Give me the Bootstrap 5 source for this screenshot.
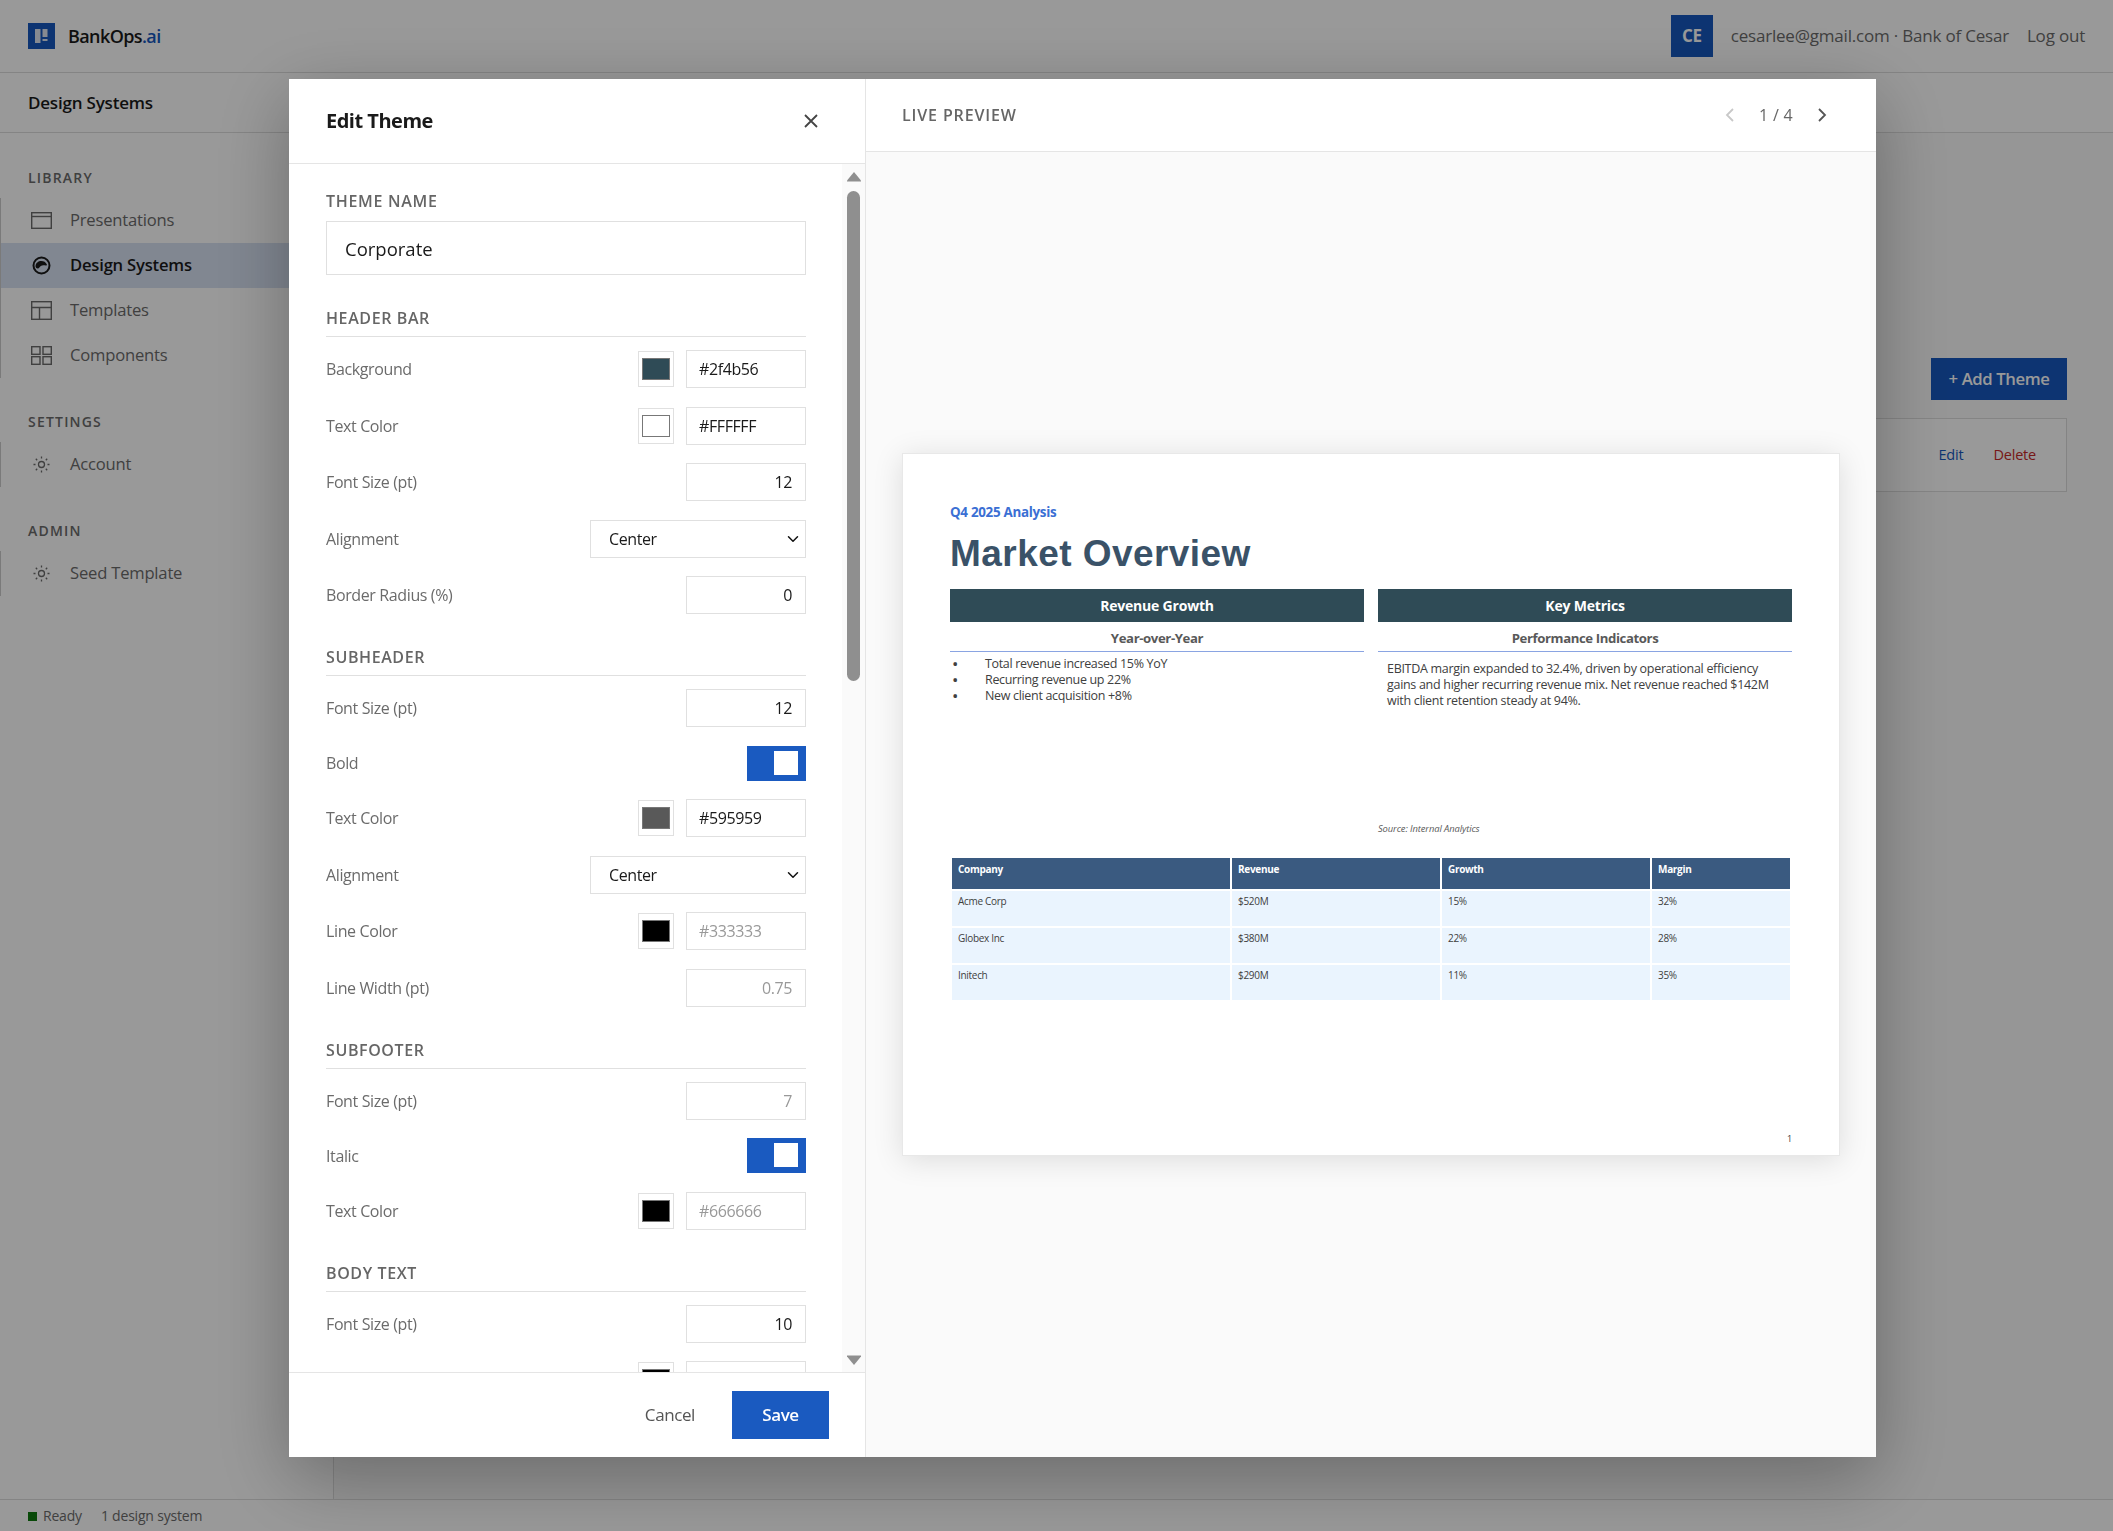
<!DOCTYPE html>
<html lang="en">
<head>
    <meta charset="UTF-8">
    <meta name="viewport" content="width=device-width, initial-scale=1">
    <title>Edit Theme</title>
    <link href="https://cdn.jsdelivr.net/npm/bootstrap@5.3.0/dist/css/bootstrap.min.css" rel="stylesheet">
    <script src="https://cdn.jsdelivr.net/npm/bootstrap@5.3.0/dist/js/bootstrap.bundle.min.js"></script>

    <style>
        html, body {
            height: 100%;
            overflow: hidden;
        }
        body {
            font-family: "Open Sans", "Noto Sans", sans-serif;
            font-size: 16px;
            letter-spacing: -0.2px;
            color: #1a1a1a;
            background: #fff;
        }

        /* page behind the dialog */
        .top-strip {
            height: 73px;
            padding: 0 28px;
            border-bottom: 1px solid #ddd;
        }
        .brand-row {
            gap: 13px;
        }
        .brand-mark {
            width: 27px;
            height: 26px;
            background: #1658be;
        }
        .brand-name {
            font-size: 18px;
            font-weight: 600;
            letter-spacing: -0.6px;
        }
        .brand-name span {
            color: #1658be;
        }
        .user-chip {
            width: 42px;
            height: 42px;
            background: #1658be;
            color: #fff;
            font-size: 17px;
            font-weight: 700;
            letter-spacing: -0.5px;
        }
        .user-text {
            margin-left: 18px;
            color: #6b6b6b;
            font-size: 17px;
        }
        .title-strip {
            height: 60px;
            padding: 0 28px;
            border-bottom: 1px solid #ddd;
            font-size: 17px;
            font-weight: 600;
        }
        .side-col {
            width: 334px;
            border-right: 1px solid #ddd;
            padding-top: 35px;
        }
        .side-head {
            height: 20px;
            margin-bottom: 10px;
            padding-left: 28px;
            font-size: 14px;
            font-weight: 600;
            letter-spacing: 1.2px;
            color: #6b6b6b;
            line-height: 20px;
        }
        .side-group {
            margin-bottom: 34px;
        }
        .side-link {
            height: 45px;
            padding-left: 31px;
            gap: 18px;
            border-left: 1px solid #ccc;
            color: #6b6b6b;
            font-size: 16.6px;
            text-decoration: none;
        }
        .side-link.current {
            background: #d7e1f2;
            color: #1a1a1a;
            font-weight: 600;
        }
        .side-link svg {
            flex: none;
            margin-left: -1px;
        }
        .main-col {
            background: #fafafa;
            padding: 225px 46px 0 0;
        }
        .add-btn {
            width: 136px;
            height: 42px;
            background: #1658be;
            color: #fff;
            font-size: 16.7px;
            font-weight: 600;
            border: 0;
            border-radius: 0;
            letter-spacing: -0.4px;
        }
        .theme-row {
            height: 74px;
            margin-top: 18px;
            padding-right: 30px;
            gap: 30px;
            background: #fff;
            border: 1px solid #ddd;
            font-size: 14.5px;
            font-weight: 500;
        }
        .status-strip {
            height: 32px;
            padding: 0 28px;
            gap: 19px;
            border-top: 1px solid #ddd;
            color: #6b6b6b;
            font-size: 14px;
        }
        .status-dot {
            display: inline-block;
            width: 9px;
            height: 9px;
            margin-right: 6px;
            background: #0e7a0e;
        }

        /* dialog */
        .dim-layer {
            position: fixed;
            inset: 0;
            background: rgba(0, 0, 0, 0.4);
            padding: 79px 0 74px 289px;
        }
        .theme-dialog {
            width: 1587px;
            height: 1378px;
            background: #fff;
            box-shadow: 0 20px 70px rgba(0, 0, 0, 0.3);
        }
        .edit-pane {
            width: 577px;
            border-right: 1px solid #e5e5e5;
        }
        .edit-head {
            height: 85px;
            padding: 0 47px 0 37px;
            border-bottom: 1px solid #e5e5e5;
        }
        .edit-title {
            font-size: 20px;
            font-weight: 700;
            margin: 0;
            letter-spacing: -0.5px;
        }
        .edit-body {
            min-height: 0;
            overflow: hidden;
        }
        .edit-form {
            width: 517px;
            padding: 27px 0 0 37px;
            flex: none;
        }
        .group-title {
            font-size: 16px;
            font-weight: 600;
            line-height: 20px;
            letter-spacing: 0.6px;
            color: #666;
            padding-bottom: 8px;
            margin: 33px 0 13px;
            border-bottom: 1px solid #e0e0e0;
        }
        .name-label {
            font-size: 16px;
            font-weight: 600;
            line-height: 20px;
            letter-spacing: 0.7px;
            color: #666;
            margin-bottom: 10px;
        }
        .name-input.form-control {
            height: 54px;
            padding-left: 18px;
            font-size: 18.5px;
            border: 1px solid #e0e0e0;
            border-radius: 0;
            color: #1a1a1a;
        }
        .field-stack {
            gap: 18.5px;
        }
        .field-row {
            min-height: 35px;
        }
        .field-name {
            color: #6b6b6b;
            font-size: 16px;
            letter-spacing: -0.38px;
        }
        .field-row .form-control,
        .field-row .form-select {
            height: 38px;
            border: 1px solid #e0e0e0;
            border-radius: 0;
            font-size: 16px;
            color: #1a1a1a;
            letter-spacing: -0.4px;
            background-color: #fff;
        }
        .field-row .form-control {
            width: 120px;
            padding: 0 13px 0 12px;
        }
        .field-row .form-select {
            width: 216px;
            padding: 0 30px 0 18px;
            background-position: right 4px center;
            --bs-form-select-bg-img: url("data:image/svg+xml,%3csvg xmlns='http://www.w3.org/2000/svg' viewBox='0 0 16 16'%3e%3cpath fill='none' stroke='%23111' stroke-linecap='round' stroke-linejoin='round' stroke-width='2' d='m2 5 6 6 6-6'/%3e%3c/svg%3e");
        }
        .field-row .form-control:disabled {
            color: #999;
            opacity: 1;
        }
        .field-row input[type=number] {
            text-align: right;
            -moz-appearance: textfield;
        }
        .field-row input[type=number]::-webkit-inner-spin-button {
            display: none;
        }
        .swatch-input {
            width: 36px;
            height: 36px;
            padding: 6px 3px;
            border: 1px solid #e0e0e0;
            background: #fff;
            flex: none;
        }
        .swatch-input::-webkit-color-swatch-wrapper {
            padding: 0;
        }
        .swatch-input::-webkit-color-swatch {
            border: 1px solid #777;
            border-radius: 0;
        }
        .square-toggle {
            width: 59px;
            height: 35px;
            padding: 5px 8px;
            background: #1a5ac0;
        }
        .square-toggle span {
            width: 24px;
            height: 24px;
            background: #fff;
        }
        .fake-scroll {
            width: 23px;
            margin-left: 36px;
            padding: 8px 5px 7px;
            background: #fafafa;
            flex: none;
        }
        .fake-thumb {
            width: 13px;
            height: 490px;
            margin-top: 9px;
            background: #8f8f8f;
            border-radius: 7px;
        }
        .edit-foot {
            height: 85px;
            padding-right: 36px;
            gap: 37px;
            border-top: 1px solid #e5e5e5;
        }
        .cancel-link {
            font-size: 17px;
            font-weight: 500;
            color: #555;
            letter-spacing: -0.4px;
        }
        .save-btn {
            width: 97px;
            height: 48px;
            padding: 0;
            background: #1a5ac0;
            color: #fff;
            border: 0;
            border-radius: 0;
            font-size: 17px;
            font-weight: 600;
            letter-spacing: -0.4px;
        }

        /* preview */
        .preview-head {
            height: 73px;
            padding: 0 49px 0 36px;
            border-bottom: 1px solid #e5e5e5;
        }
        .preview-label {
            font-size: 16px;
            font-weight: 600;
            letter-spacing: 0.85px;
            color: #666;
        }
        .pager-text {
            width: 82px;
            text-align: center;
            font-size: 16px;
            color: #666;
            letter-spacing: 0.3px;
        }
        .preview-stage {
            background: #fafafa;
        }
        .slide-sheet {
            position: relative;
            width: 938px;
            height: 703px;
            padding: 48px 47px 0;
            background: #fff;
            border: 1px solid #e8e8e8;
            box-shadow: 0 4px 28px rgba(0, 0, 0, 0.12);
        }
        .slide-kicker {
            font-size: 13.4px;
            font-weight: 700;
            line-height: 20px;
            color: #3b6fd4;
            letter-spacing: -0.3px;
        }
        .slide-title {
            font-family: "Liberation Sans", Arial, sans-serif;
            font-size: 37px;
            font-weight: 700;
            line-height: 42px;
            letter-spacing: 0.45px;
            color: #3a5268;
            margin: 11px 0 14px;
        }
        .slide-cols {
            gap: 14px;
        }
        .slide-col {
            width: 414px;
        }
        .col-bar {
            height: 33px;
            background: #2f4b56;
            color: #fff;
            font-size: 14px;
            font-weight: 700;
            line-height: 33px;
            text-align: center;
            letter-spacing: -0.2px;
        }
        .col-sub {
            height: 30px;
            line-height: 32px;
            font-size: 13.2px;
            font-weight: 700;
            color: #595959;
            text-align: center;
            border-bottom: 1px solid #8aa4e2;
            letter-spacing: -0.4px;
        }
        .col-list {
            margin: 4px 0 0;
            padding: 0;
            list-style: none;
            font-size: 12.5px;
            line-height: 16px;
            color: #404040;
            letter-spacing: -0.33px;
        }
        .col-list li {
            display: flex;
        }
        .col-list li::before {
            content: "\2022";
            width: 35px;
            padding-left: 2px;
            flex: none;
            font-size: 17px;
        }
        .col-para {
            margin: 9px 0 0;
            padding: 0 8px 0 9px;
            font-size: 12.5px;
            line-height: 16px;
            color: #404040;
            letter-spacing: -0.3px;
        }
        .slide-source {
            height: 14px;
            margin: 113px 0 0 428px;
            font-size: 9.4px;
            font-style: italic;
            line-height: 14px;
            color: #595959;
            letter-spacing: -0.1px;
        }
        .slide-table {
            width: 842px;
            margin: 20px 0 0;
            border-collapse: separate;
            border-spacing: 2px;
            table-layout: fixed;
            font-size: 10px;
            letter-spacing: -0.3px;
            color: #404040;
        }
        .slide-table th {
            height: 31px;
            padding: 0 6px 9px;
            background: #3a5a80;
            color: #fff;
            font-weight: 700;
        }
        .slide-table td {
            height: 35px;
            padding: 3px 6px 0;
            vertical-align: top;
            background: #eaf4fe;
        }
        .slide-num {
            position: absolute;
            right: 47px;
            bottom: 10px;
            font-size: 9px;
            color: #404040;
        }
    </style>
</head>
<body>

    <div class="d-flex flex-column h-100">
        <header class="top-strip d-flex align-items-center justify-content-between flex-none">
            <div class="brand-row d-flex align-items-center">
                <span class="brand-mark d-flex">
                    <svg width="27" height="26" viewBox="0 0 27 26"><path fill="#dfe6f2" d="M7 6h5.500v14H7zM14.500 6h5v8h-5zM14.500 16h5v2h-5z"/></svg>
                </span>
                <span class="brand-name">BankOps<span>.ai</span></span>
            </div>
            <div class="d-flex align-items-center">
                <span class="user-chip d-flex align-items-center justify-content-center">CE</span>
                <span class="user-text">cesarlee@gmail.com · Bank of Cesar</span>
                <span class="user-text">Log out</span>
            </div>
        </header>

        <div class="title-strip d-flex align-items-center">Design Systems</div>

        <div class="d-flex flex-grow-1" style="min-height: 0">
            <aside class="side-col flex-shrink-0">
                <div class="side-group">
                    <div class="side-head">LIBRARY</div>
                    <a class="side-link d-flex align-items-center" href="#">
                        <svg width="21" height="17" viewBox="0 0 21 17" fill="none" stroke="currentColor" stroke-width="1.4"><rect x=".7" y=".7" width="19.6" height="15.6"/><path d="M.7 4.5h19.6"/></svg>
                        Presentations
                    </a>
                    <a class="side-link current d-flex align-items-center" href="#">
                        <svg width="21" height="19" viewBox="0 0 21 19"><circle cx="10.5" cy="9.5" r="8" fill="none" stroke="currentColor" stroke-width="2"/><path fill="currentColor" d="M4.5 10c.2-3 2.800-5 5.800-5 2.400 0 4.600 1.200 5.500 3.300.3.800-.2 1.300-1 1.200-1.800-.3-3.500-.6-5 .4-1.200.8-1.600 2.500-3 2.500-1.500 0-2.400-1-2.300-2.400z"/></svg>
                        Design Systems
                    </a>
                    <a class="side-link d-flex align-items-center" href="#">
                        <svg width="21" height="19" viewBox="0 0 21 19" fill="none" stroke="currentColor" stroke-width="1.4"><rect x=".7" y=".7" width="19.6" height="17.600"/><path d="M.7 6.500h19.600M8.500 6.500v11.800"/></svg>
                        Templates
                    </a>
                    <a class="side-link d-flex align-items-center" href="#">
                        <svg width="21" height="19" viewBox="0 0 21 19" fill="none" stroke="currentColor" stroke-width="1.4"><rect x=".7" y=".7" width="8.300" height="7.600"/><rect x="12" y=".7" width="8.300" height="7.600"/><rect x=".7" y="10.700" width="8.300" height="7.600"/><rect x="12" y="10.700" width="8.300" height="7.600"/></svg>
                        Components
                    </a>
                </div>
                <div class="side-group">
                    <div class="side-head">SETTINGS</div>
                    <a class="side-link d-flex align-items-center" href="#">
                        <svg width="21" height="19" viewBox="0 0 21 19" fill="none" stroke="currentColor" stroke-width="1.300"><circle cx="10.500" cy="9.500" r="3"/><path d="M10.500 1.500v2M10.500 15.500v2M2.500 9.500h2M16.500 9.500h2M4.800 3.800l1.400 1.400M14.800 13.800l1.400 1.400M4.800 15.200l1.400-1.400M14.800 5.200l1.400-1.400"/></svg>
                        Account
                    </a>
                </div>
                <div class="side-group">
                    <div class="side-head">ADMIN</div>
                    <a class="side-link d-flex align-items-center" href="#">
                        <svg width="21" height="19" viewBox="0 0 21 19" fill="none" stroke="currentColor" stroke-width="1.300"><circle cx="10.500" cy="9.500" r="3"/><path d="M10.500 1.500v2M10.500 15.500v2M2.500 9.500h2M16.500 9.500h2M4.800 3.800l1.400 1.400M14.800 13.800l1.400 1.400M4.800 15.200l1.400-1.400M14.800 5.200l1.400-1.400"/></svg>
                        Seed Template
                    </a>
                </div>
            </aside>
            <main class="main-col flex-grow-1">
                <div class="d-flex justify-content-end">
                    <button class="btn add-btn" type="button">+ Add Theme</button>
                </div>
                <div class="theme-row d-flex align-items-center justify-content-end">
                    <span style="color: #1658be">Edit</span>
                    <span style="color: #c62828">Delete</span>
                </div>
            </main>
        </div>

        <footer class="status-strip d-flex align-items-center">
            <span><i class="status-dot"></i>Ready</span>
            <span>1 design system</span>
        </footer>
    </div>

    <div class="dim-layer">
        <div class="theme-dialog d-flex">

            <div class="edit-pane d-flex flex-column flex-shrink-0">
                <div class="edit-head d-flex align-items-center justify-content-between flex-shrink-0">
                    <h5 class="edit-title">Edit Theme</h5>
                    <svg width="14" height="14" viewBox="0 0 14 14" fill="none" stroke="#444" stroke-width="1.800"><path d="M1 1l12 12M13 1L1 13"/></svg>
                </div>

                <div class="edit-body d-flex flex-grow-1">
                    <form class="edit-form">
                        <div class="name-label">THEME NAME</div>
                        <input class="form-control name-input" type="text" value="Corporate">

                        <div class="group-title">HEADER BAR</div>
                        <div class="field-stack d-flex flex-column">
                            <div class="field-row d-flex align-items-center">
                                <span class="field-name me-auto">Background</span>
                                <input class="swatch-input me-2 ms-2" type="color" value="#2f4b56">
                                <input class="form-control ms-1" type="text" value="#2f4b56">
                            </div>
                            <div class="field-row d-flex align-items-center">
                                <span class="field-name me-auto">Text Color</span>
                                <input class="swatch-input me-2 ms-2" type="color" value="#ffffff">
                                <input class="form-control ms-1" type="text" value="#FFFFFF">
                            </div>
                            <div class="field-row d-flex align-items-center justify-content-between">
                                <span class="field-name">Font Size (pt)</span>
                                <input class="form-control" type="number" value="12">
                            </div>
                            <div class="field-row d-flex align-items-center justify-content-between">
                                <span class="field-name">Alignment</span>
                                <select class="form-select"><option>Center</option></select>
                            </div>
                            <div class="field-row d-flex align-items-center justify-content-between">
                                <span class="field-name">Border Radius (%)</span>
                                <input class="form-control" type="number" value="0">
                            </div>
                        </div>

                        <div class="group-title">SUBHEADER</div>
                        <div class="field-stack d-flex flex-column">
                            <div class="field-row d-flex align-items-center justify-content-between">
                                <span class="field-name">Font Size (pt)</span>
                                <input class="form-control" type="number" value="12">
                            </div>
                            <div class="field-row d-flex align-items-center justify-content-between">
                                <span class="field-name">Bold</span>
                                <div class="square-toggle d-flex justify-content-end"><span></span></div>
                            </div>
                            <div class="field-row d-flex align-items-center">
                                <span class="field-name me-auto">Text Color</span>
                                <input class="swatch-input me-2 ms-2" type="color" value="#595959">
                                <input class="form-control ms-1" type="text" value="#595959">
                            </div>
                            <div class="field-row d-flex align-items-center justify-content-between">
                                <span class="field-name">Alignment</span>
                                <select class="form-select"><option>Center</option></select>
                            </div>
                            <div class="field-row d-flex align-items-center">
                                <span class="field-name me-auto">Line Color</span>
                                <input class="swatch-input me-2 ms-2" type="color" value="#000000">
                                <input class="form-control ms-1" type="text" value="#333333" disabled>
                            </div>
                            <div class="field-row d-flex align-items-center justify-content-between">
                                <span class="field-name">Line Width (pt)</span>
                                <input class="form-control" type="number" value="0.75" disabled>
                            </div>
                        </div>

                        <div class="group-title">SUBFOOTER</div>
                        <div class="field-stack d-flex flex-column">
                            <div class="field-row d-flex align-items-center justify-content-between">
                                <span class="field-name">Font Size (pt)</span>
                                <input class="form-control" type="number" value="7" disabled>
                            </div>
                            <div class="field-row d-flex align-items-center justify-content-between">
                                <span class="field-name">Italic</span>
                                <div class="square-toggle d-flex justify-content-end"><span></span></div>
                            </div>
                            <div class="field-row d-flex align-items-center">
                                <span class="field-name me-auto">Text Color</span>
                                <input class="swatch-input me-2 ms-2" type="color" value="#000000">
                                <input class="form-control ms-1" type="text" value="#666666" disabled>
                            </div>
                        </div>

                        <div class="group-title">BODY TEXT</div>
                        <div class="field-stack d-flex flex-column">
                            <div class="field-row d-flex align-items-center justify-content-between">
                                <span class="field-name">Font Size (pt)</span>
                                <input class="form-control" type="number" value="10">
                            </div>
                            <!-- this row is scrolled under the footer, only its top edge shows -->
                            <div class="field-row d-flex align-items-center justify-content-end">
                                <input class="swatch-input me-2" type="color" value="#000000">
                                <input class="form-control ms-1" type="text">
                            </div>
                        </div>
                    </form>

                    <div class="fake-scroll d-flex flex-column align-items-center">
                        <svg width="14" height="10" viewBox="0 0 14 10"><path fill="#8f8f8f" d="M7 0l7 8.500q.5 1-.5 1H.5q-1 0-.5-1z"/></svg>
                        <div class="fake-thumb"></div>
                        <svg class="mt-auto" width="14" height="10" viewBox="0 0 14 10"><path fill="#8f8f8f" d="M7 10L14 1.500q.5-1-.5-1H.5q-1 0-.5 1z"/></svg>
                    </div>
                </div>

                <div class="edit-foot d-flex align-items-center justify-content-end flex-shrink-0">
                    <span class="cancel-link">Cancel</span>
                    <button class="btn save-btn" type="button">Save</button>
                </div>
            </div>

            <div class="d-flex flex-column flex-grow-1">
                <div class="preview-head d-flex align-items-center justify-content-between flex-shrink-0">
                    <span class="preview-label">LIVE PREVIEW</span>
                    <div class="d-flex align-items-center">
                        <svg width="10" height="14" viewBox="0 0 10 14" fill="none" stroke="#c8c8c8" stroke-width="1.800"><path d="M8 1L2 7l6 6"/></svg>
                        <span class="pager-text">1 / 4</span>
                        <svg width="10" height="14" viewBox="0 0 10 14" fill="none" stroke="#555" stroke-width="1.800"><path d="M2 1l6 6-6 6"/></svg>
                    </div>
                </div>

                <div class="preview-stage d-flex flex-grow-1 align-items-center justify-content-center">
                    <div class="slide-sheet">
                        <div class="slide-kicker">Q4 2025 Analysis</div>
                        <div class="slide-title">Market Overview</div>
                        <div class="slide-cols d-flex">
                            <div class="slide-col">
                                <div class="col-bar">Revenue Growth</div>
                                <div class="col-sub">Year-over-Year</div>
                                <ul class="col-list">
                                    <li>Total revenue increased 15% YoY</li>
                                    <li>Recurring revenue up 22%</li>
                                    <li>New client acquisition +8%</li>
                                </ul>
                            </div>
                            <div class="slide-col">
                                <div class="col-bar">Key Metrics</div>
                                <div class="col-sub">Performance Indicators</div>
                                <p class="col-para">EBITDA margin expanded to 32.4%, driven by operational efficiency gains and higher recurring revenue mix. Net revenue reached $142M with client retention steady at 94%.</p>
                            </div>
                        </div>
                        <div class="slide-source">Source: Internal Analytics</div>
                        <table class="slide-table">
                            <colgroup>
                                <col style="width: 278px"><col style="width: 208px"><col style="width: 208px"><col style="width: 138px">
                            </colgroup>
                            <thead>
                                <tr><th>Company</th><th>Revenue</th><th>Growth</th><th>Margin</th></tr>
                            </thead>
                            <tbody>
                                <tr><td>Acme Corp</td><td>$520M</td><td>15%</td><td>32%</td></tr>
                                <tr><td>Globex Inc</td><td>$380M</td><td>22%</td><td>28%</td></tr>
                                <tr><td>Initech</td><td>$290M</td><td>11%</td><td>35%</td></tr>
                            </tbody>
                        </table>
                        <span class="slide-num">1</span>
                    </div>
                </div>
            </div>

        </div>
    </div>

</body>
</html>
